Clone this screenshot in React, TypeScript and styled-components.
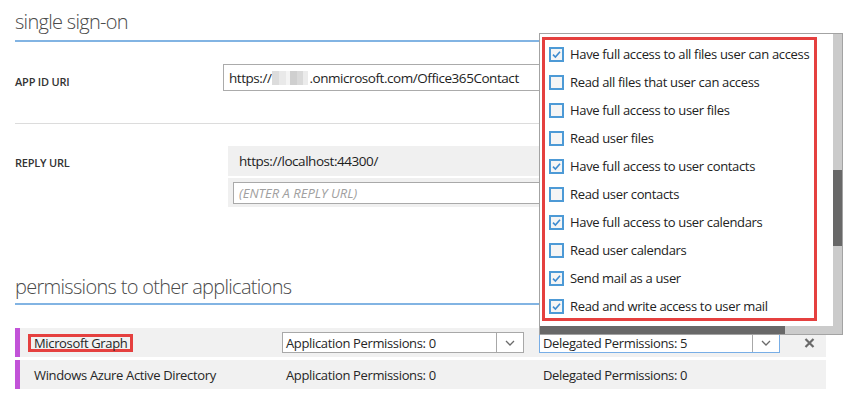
import React from 'react';
import styled, { createGlobalStyle } from 'styled-components';

const Global = createGlobalStyle`
  html, body { margin: 0; padding: 0; background: #ffffff; }
  body { font-family: "Open Sans", "Noto Sans", sans-serif; color: #262626; }
  * { box-sizing: border-box; }
`;

const Page = styled.div`
  position: relative;
  width: 861px;
  height: 402px;
  overflow: hidden;
  padding: 0 34px 0 15px;
`;

const SectionTitle = styled.h2<{ $top: number; $padTop: number; $bottom: number }>`
  margin: ${(p) => p.$top}px 0 0 0;
  padding: ${(p) => p.$padTop}px 0 ${(p) => p.$bottom}px 0;
  font-size: 20px;
  line-height: 28px;
  font-weight: 300;
  letter-spacing: -0.7px;
  color: #4a4a4a;
  border-bottom: 2px solid #82b4e3;
`;

const Field = styled.div<{ $divider?: boolean; $cols: number }>`
  display: grid;
  grid-template-columns: ${(p) => p.$cols}px 1fr;
  align-items: start;
  padding-top: 22px;
  padding-bottom: ${(p) => (p.$divider ? 32 : 0)}px;
  border-bottom: ${(p) => (p.$divider ? '1px solid #dcdcdc' : 'none')};
`;

const Label = styled.div<{ $pt: number }>`
  padding-top: ${(p) => p.$pt}px;
  font-size: 11px;
  line-height: 16px;
  font-weight: 600;
  letter-spacing: -0.2px;
  color: #333;
  text-transform: uppercase;
`;

const TextBox = styled.div`
  height: 27px;
  border: 1px solid #ababab;
  padding: 0 5px;
  display: flex;
  align-items: center;
  font-size: 13.5px;
  letter-spacing: -0.45px;
  color: #1e1e1e;
  white-space: nowrap;
  overflow: hidden;
`;

const Blur = styled.span`
  display: inline-block;
  width: 36px;
  height: 14px;
  margin: 0 1px;
  background:
    linear-gradient(90deg, #dcdcdc 0 7px, #e9e9e9 7px 14px, #f4f4f4 14px 18px, #cfcfcf 18px 25px, #d9d9d9 25px 31px, #ebebeb 31px 36px);
`;

const UrlList = styled.div`
  display: flex;
  flex-direction: column;
  gap: 2px;
`;

const UrlRow = styled.div<{ $h: number }>`
  height: ${(p) => p.$h}px;
  background: #f0f0f0;
  display: flex;
  align-items: center;
  padding: 0 5px;
  font-size: 13.5px;
  letter-spacing: -0.45px;
  color: #1e1e1e;
`;

const UrlText = styled.span`
  padding-left: 6px;
`;

const UrlInput = styled.div`
  flex: 1;
  height: 22px;
  background: #fff;
  border: 1px solid #a9a9a9;
  padding: 0 5px;
  display: flex;
  align-items: center;
  font-size: 13px;
  letter-spacing: 0;
  font-style: italic;
  color: #a0a0a0;
`;

const Rows = styled.div`
  margin-top: 23px;
  display: flex;
  flex-direction: column;
  gap: 3px;
  width: 811px;
`;

const AppRow = styled.div`
  display: grid;
  grid-template-columns: 248px 257px 241px 1fr;
  align-items: center;
  height: 29px;
  background: #f1f1f1;
  border-left: 5px solid #c253d8;
  padding-left: 14px;
  font-size: 13px;
  letter-spacing: -0.35px;
  color: #262626;
  white-space: nowrap;
`;

const AppName = styled.span<{ $marked?: boolean }>`
  justify-self: start;
  margin-left: ${(p) => (p.$marked ? -6 : 0)}px;
  padding: 0 ${(p) => (p.$marked ? 3 : 0)}px;
  border: ${(p) => (p.$marked ? '3px solid #e5403f' : 'none')};
  line-height: 12px;
`;

const PlainValue = styled.span`
  padding-left: 4px;
`;

const Select = styled.div<{ $w: number; $focus?: boolean }>`
  width: ${(p) => p.$w}px;
  height: 21px;
  display: flex;
  background: #fff;
  border: 1px solid ${(p) => (p.$focus ? '#78aee6' : '#a8a8a8')};
`;

const SelectValue = styled.div`
  flex: 1;
  padding-left: 3px;
  display: flex;
  align-items: center;
`;

const SelectArrow = styled.div`
  width: 27px;
  border-left: 1px solid #a8a8a8;
  display: flex;
  align-items: center;
  justify-content: center;
`;

const RemoveButton = styled.div`
  display: flex;
  justify-content: center;
  align-items: center;
  padding-left: 12px;
  height: 100%;
`;

const Popup = styled.div`
  position: absolute;
  left: 539px;
  top: 33px;
  width: 304px;
  height: 302px;
  border: 1px solid #a3a3a3;
  background: #fff;
  display: grid;
  grid-template-columns: 1fr 9px;
  grid-template-rows: 1fr 8px;
`;

const PopupBody = styled.div`
  position: relative;
  overflow: hidden;
  padding-top: 6px;
`;

const Item = styled.div`
  height: 28px;
  display: flex;
  align-items: center;
  gap: 6px;
  padding-left: 9px;
  font-size: 13px;
  letter-spacing: -0.33px;
  color: #222;
  white-space: nowrap;
`;

const Box = styled.span`
  width: 15px;
  height: 15px;
  flex: none;
  border: 2px solid #4d9ad6;
  background: #f5f5f5;
  display: flex;
  align-items: center;
  justify-content: center;
`;

const RedFrame = styled.div`
  position: absolute;
  left: 2px;
  top: 3px;
  width: 275px;
  height: 284px;
  border: 3px solid #e5403f;
  pointer-events: none;
`;

const VTrack = styled.div`
  background: #cbcbcb;
  display: flex;
  flex-direction: column;
  padding-top: 136px;
`;

const VThumb = styled.div`
  height: 76px;
  background: #686868;
`;

const HTrack = styled.div`
  background: #cbcbcb;
  display: flex;
`;

const HThumb = styled.div`
  width: 245px;
  background: #686868;
`;

const Corner = styled.div`
  background: #cbcbcb;
`;

const Chevron = () => (
  <svg width="10" height="6" viewBox="0 0 10 6">
    <path d="M1 1 L5 5 L9 1" fill="none" stroke="#6b6b6b" strokeWidth="1.3" />
  </svg>
);

const Check = () => (
  <svg width="11" height="11" viewBox="0 0 11 11">
    <path d="M2 5.6 L4.4 8 L9 2.8" fill="none" stroke="#3d8bd0" strokeWidth="1.6" />
  </svg>
);

const Cross = () => (
  <svg width="11" height="10" viewBox="0 0 11 10">
    <path d="M1.5 1 L9.5 9 M9.5 1 L1.5 9" stroke="#6a6a6a" strokeWidth="2.2" />
  </svg>
);

const permissions: { label: string; checked: boolean }[] = [
  { label: 'Have full access to all files user can access', checked: true },
  { label: 'Read all files that user can access', checked: false },
  { label: 'Have full access to user files', checked: false },
  { label: 'Read user files', checked: false },
  { label: 'Have full access to user contacts', checked: true },
  { label: 'Read user contacts', checked: false },
  { label: 'Have full access to user calendars', checked: true },
  { label: 'Read user calendars', checked: false },
  { label: 'Send mail as a user', checked: true },
  { label: 'Read and write access to user mail', checked: true },
];

export default function App() {
  return (
    <>
      <Global />
      <Page>
        <SectionTitle $top={0} $padTop={8} $bottom={4}>single sign-on</SectionTitle>

        <Field $divider $cols={208}>
          <Label $pt={10}>App ID URI</Label>
          <TextBox>
            https://<Blur />.onmicrosoft.com/Office365Contact
          </TextBox>
        </Field>

        <Field $cols={213}>
          <Label $pt={9}>Reply URL</Label>
          <UrlList>
            <UrlRow $h={30}>
              <UrlText>https://localhost:44300/</UrlText>
            </UrlRow>
            <UrlRow $h={29}>
              <UrlInput>(ENTER A REPLY URL)</UrlInput>
            </UrlRow>
          </UrlList>
        </Field>

        <SectionTitle $top={56} $padTop={10} $bottom={2}>permissions to other applications</SectionTitle>

        <Rows>
          <AppRow>
            <AppName $marked>Microsoft Graph</AppName>
            <Select $w={242}>
              <SelectValue>Application Permissions: 0</SelectValue>
              <SelectArrow><Chevron /></SelectArrow>
            </Select>
            <Select $w={241} $focus>
              <SelectValue>Delegated Permissions: 5</SelectValue>
              <SelectArrow><Chevron /></SelectArrow>
            </Select>
            <RemoveButton><Cross /></RemoveButton>
          </AppRow>
          <AppRow>
            <AppName>Windows Azure Active Directory</AppName>
            <PlainValue>Application Permissions: 0</PlainValue>
            <PlainValue>Delegated Permissions: 0</PlainValue>
            <span />
          </AppRow>
        </Rows>

        <Popup>
          <PopupBody>
            {permissions.map((p) => (
              <Item key={p.label}>
                <Box>{p.checked && <Check />}</Box>
                {p.label}
              </Item>
            ))}
            <RedFrame />
          </PopupBody>
          <VTrack><VThumb /></VTrack>
          <HTrack><HThumb /></HTrack>
          <Corner />
        </Popup>
      </Page>
    </>
  );
}
